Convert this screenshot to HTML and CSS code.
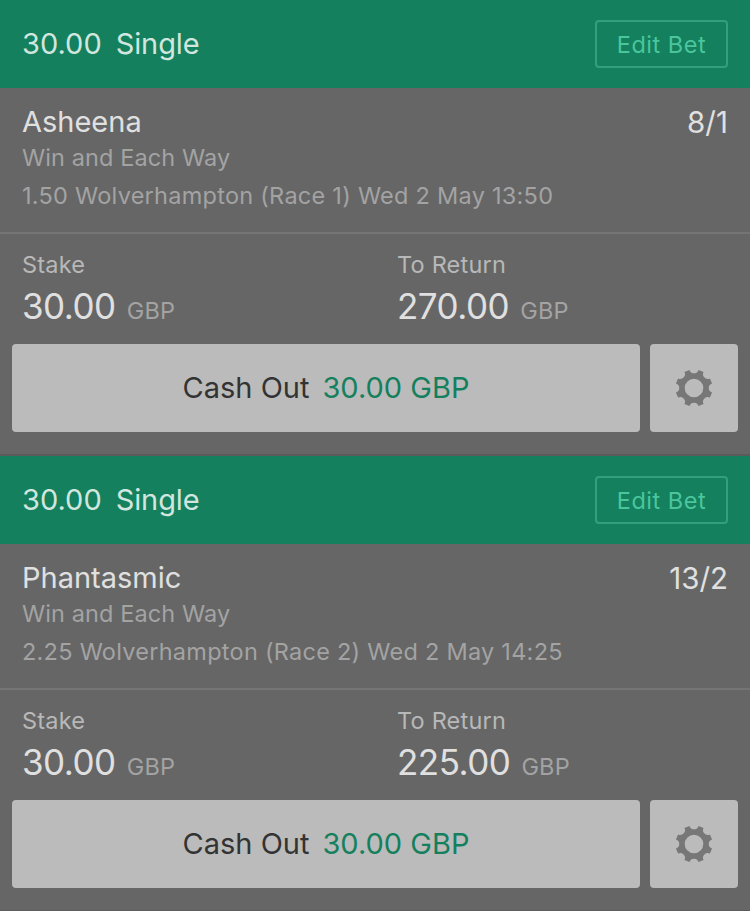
FILE: index.html
```html
<!DOCTYPE html>
<html lang="en">
<head>
<meta charset="utf-8">
<title>My Bets</title>
<link rel="stylesheet" href="styles.css">
</head>
<body>
<svg class="defs" width="0" height="0" aria-hidden="true">
  <symbol id="gear" viewBox="-20 -20 40 40">
    <path fill-rule="evenodd" d="M-4.5-18.05A4.7 4.7 0 0 0 4.5-18.05L9.58-15.94A4.7 4.7 0 0 0 15.94-9.58L18.05-4.5A4.7 4.7 0 0 0 18.05 4.5L15.94 9.58A4.7 4.7 0 0 0 9.58 15.94L4.5 18.05A4.7 4.7 0 0 0-4.5 18.05L-9.58 15.94A4.7 4.7 0 0 0-15.94 9.58L-18.05 4.5A4.7 4.7 0 0 0-18.05-4.5L-15.94-9.58A4.7 4.7 0 0 0-9.58-15.94ZM-9.3 0a9.3 9.3 0 1 0 18.6 0a9.3 9.3 0 1 0-18.6 0Z"/>
  </symbol>
</svg>
<main>
  <article class="bet">
    <header class="bet-header">
      <h2 class="title"><span>30.00</span><span class="title-type">Single</span></h2>
      <button class="edit">Edit Bet</button>
    </header>
    <section class="selection">
      <div class="row"><span class="name">Asheena</span><span class="odds">8/1</span></div>
      <div class="market">Win and Each Way</div>
      <div class="event">1.50 Wolverhampton (Race 1) Wed 2 May 13:50</div>
    </section>
    <section class="amounts">
      <div class="amount"><div class="label">Stake</div><div class="value"><span class="figure">30.00</span><span class="currency">GBP</span></div></div>
      <div class="amount"><div class="label">To Return</div><div class="value"><span class="figure">270.00</span><span class="currency">GBP</span></div></div>
    </section>
    <footer class="actions">
      <button class="cashout"><span class="cash-label">Cash Out</span><span class="cash-value">30.00 GBP</span></button>
      <button class="settings" aria-label="Settings"><svg width="40" height="40"><use href="#gear"/></svg></button>
    </footer>
  </article>
  <article class="bet">
    <header class="bet-header">
      <h2 class="title"><span>30.00</span><span class="title-type">Single</span></h2>
      <button class="edit">Edit Bet</button>
    </header>
    <section class="selection">
      <div class="row"><span class="name">Phantasmic</span><span class="odds">13/2</span></div>
      <div class="market">Win and Each Way</div>
      <div class="event">2.25 Wolverhampton (Race 2) Wed 2 May 14:25</div>
    </section>
    <section class="amounts">
      <div class="amount"><div class="label">Stake</div><div class="value"><span class="figure">30.00</span><span class="currency">GBP</span></div></div>
      <div class="amount"><div class="label">To Return</div><div class="value"><span class="figure">225.00</span><span class="currency">GBP</span></div></div>
    </section>
    <footer class="actions">
      <button class="cashout"><span class="cash-label">Cash Out</span><span class="cash-value">30.00 GBP</span></button>
      <button class="settings" aria-label="Settings"><svg width="40" height="40"><use href="#gear"/></svg></button>
    </footer>
  </article>
</main>
</body>
</html>
```
FILE: styles.css
```css
* { box-sizing: border-box; }
body { margin: 0; background: #666; font-family: Inter, "Liberation Sans", sans-serif; overflow: hidden; }
.defs { display: block; }
button { font: inherit; padding: 0; border: 0; }
.bet { height: 456px; border-bottom: 2px solid #5b5b5b; background: #666; }
.bet-header { display: flex; align-items: center; justify-content: space-between; height: 88px; padding: 0 22px; background: #14805e; }
.title { display: flex; gap: 14px; margin: 0; font-size: 29px; font-weight: 400; line-height: 36px; color: #d0e6df; }
.title-type { letter-spacing: -0.1px; }
.edit { width: 133px; height: 48px; border: 2px solid #339f7d; border-radius: 4px; background: transparent; color: #4ac69d; font-size: 23.5px; letter-spacing: 0.5px; }
.selection { height: 146px; padding: 16px 22px 0; border-bottom: 2px solid #757575; }
.row { display: flex; justify-content: space-between; height: 36px; font-size: 29px; line-height: 36px; color: #e0e0e0; }
.odds { font-size: 29.5px; }
.market, .event { font-size: 23.5px; line-height: 36px; color: #a3a3a3; white-space: nowrap; letter-spacing: 0.1px; }
.event { line-height: 40px; letter-spacing: 0.26px; }
.amounts { display: grid; grid-template-columns: 375px 1fr; height: 110px; padding: 14px 0 0 22px; }
.label { font-size: 23.5px; line-height: 34px; color: #b8b8b8; letter-spacing: 0.2px; }
.value { display: flex; align-items: baseline; gap: 11px; line-height: 49px; }
.figure { font-size: 35px; color: #e0e0e0; letter-spacing: -0.5px; }
.currency { font-size: 23.5px; color: #a3a3a3; letter-spacing: 0.2px; }
.actions { display: flex; gap: 10px; padding: 0 12px; }
.cashout, .settings { height: 88px; border-radius: 4px; background: #bbb; }
.cashout { display: flex; flex: 1; align-items: center; justify-content: center; gap: 13px; padding-bottom: 2px; font-size: 29px; color: #333; }
.cash-value { color: #14805e; }
.settings { display: flex; align-items: center; justify-content: center; width: 88px; fill: #777; }
```
